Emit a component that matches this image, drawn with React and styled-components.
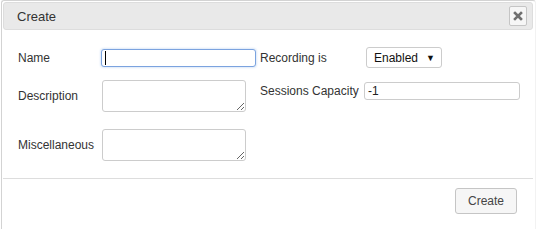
import React from 'react';
import styled, { createGlobalStyle } from 'styled-components';

const GlobalStyle = createGlobalStyle`
  html, body {
    margin: 0;
    padding: 0;
    background: #ffffff;
    overflow: hidden;
  }
  body {
    font-family: "Liberation Sans", Arial, sans-serif;
    font-size: 12px;
    color: #333333;
  }
`;

const Dialog = styled.div`
  margin-left: 1px;
  width: 535px;
  height: 229px;
  padding: 1px 2px 0 1px;
  border: 1px solid #d3d3d3;
  border-right-color: #f2f2f2;
  border-bottom: 0;
  border-radius: 3px 3px 0 0;
  background: #ffffff;
  box-sizing: border-box;
`;

const TitleBar = styled.div`
  display: flex;
  align-items: center;
  justify-content: space-between;
  height: 28px;
  padding: 0 5px 0 13px;
  border: 1px solid #dddddd;
  border-radius: 3px;
  background: #e9e9e9;
  box-sizing: border-box;
`;

const Title = styled.span`
  font-size: 13px;
  color: #333333;
`;

const CloseButton = styled.button`
  display: flex;
  align-items: center;
  justify-content: center;
  width: 18px;
  height: 20px;
  padding: 0;
  border: 1px solid #c5c5c5;
  border-radius: 2px;
  background: #f6f6f6;
  cursor: pointer;
`;

const Content = styled.div`
  display: flex;
  gap: 4px;
  padding: 17px 15px 17px 15px;
`;

const Column = styled.div`
  display: flex;
  flex-direction: column;
  width: ${({ $width }) => $width}px;
`;

const Row = styled.div`
  display: flex;
  align-items: center;
  min-height: ${({ $height }) => $height}px;
  margin-top: ${({ $space }) => $space || 0}px;
`;

const Label = styled.label`
  width: ${({ $width }) => $width}px;
  flex-shrink: 0;
  font-size: 12px;
  color: #333333;
  white-space: nowrap;
`;

const TextInput = styled.input`
  width: ${({ $width }) => $width}px;
  height: 18px;
  padding: 0 3px;
  border: 1px solid ${({ $focused }) => ($focused ? '#7ba3df' : '#cccccc')};
  border-radius: 3px;
  box-shadow: ${({ $focused }) => ($focused ? '0 0 2px 1px #dce8f8' : 'none')};
  font-family: "Liberation Sans", Arial, sans-serif;
  font-size: 12px;
  color: #222222;
  box-sizing: border-box;
  outline: none;
`;

const CaretWrap = styled.div`
  position: relative;
  display: flex;

  &::after {
    content: '';
    position: absolute;
    left: 4px;
    top: 2px;
    width: 1px;
    height: 14px;
    background: #000000;
  }
`;

const TextArea = styled.textarea`
  width: 144px;
  height: 32px;
  margin-left: 1px;
  padding: 2px 3px;
  border: 1px solid #cccccc;
  border-radius: 3px;
  font-family: "Liberation Sans", Arial, sans-serif;
  font-size: 12px;
  box-sizing: border-box;
  outline: none;
  display: block;
`;

const SelectBox = styled.div`
  display: flex;
  align-items: center;
  justify-content: space-between;
  width: 76px;
  height: 21px;
  margin-left: 2px;
  padding: 0 6px 0 7px;
  border: 1px solid #cccccc;
  border-radius: 3px;
  background: #ffffff;
  font-size: 12px;
  color: #111111;
  box-sizing: border-box;
`;

const Arrow = styled.span`
  font-size: 9px;
  color: #111111;
`;

const Footer = styled.div`
  display: flex;
  justify-content: flex-end;
  padding: 9px 16px 10px 0;
  border-top: 1px solid #dddddd;
`;

const Button = styled.button`
  width: 62px;
  height: 26px;
  padding: 0;
  border: 1px solid #c5c5c5;
  border-radius: 3px;
  background: #f6f6f6;
  font-family: "Liberation Sans", Arial, sans-serif;
  font-size: 12px;
  color: #454545;
  cursor: pointer;
`;

const CloseIcon = () => (
  <svg width="10" height="10" viewBox="0 0 10 10">
    <path d="M2 2 L8 8 M8 2 L2 8" stroke="#6f6f6f" strokeWidth="2.6" strokeLinecap="square" />
  </svg>
);

export default function App() {
  return (
    <>
      <GlobalStyle />
      <Dialog>
        <TitleBar>
          <Title>Create</Title>
          <CloseButton aria-label="close">
            <CloseIcon />
          </CloseButton>
        </TitleBar>

        <Content>
          <Column $width={238}>
            <Row $height={21}>
              <Label $width={83}>Name</Label>
              <CaretWrap>
                <TextInput $width={155} $focused />
              </CaretWrap>
            </Row>
            <Row $height={32} $space={12}>
              <Label $width={83}>Description</Label>
              <TextArea />
            </Row>
            <Row $height={32} $space={17}>
              <Label $width={83}>Miscellaneous</Label>
              <TextArea />
            </Row>
          </Column>

          <Column $width={260}>
            <Row $height={21}>
              <Label $width={104}>Recording is</Label>
              <SelectBox>
                <span>Enabled</span>
                <Arrow>▼</Arrow>
              </SelectBox>
            </Row>
            <Row $height={18} $space={14}>
              <Label $width={104}>Sessions Capacity</Label>
              <TextInput $width={156} defaultValue="-1" />
            </Row>
          </Column>
        </Content>

        <Footer>
          <Button>Create</Button>
        </Footer>
      </Dialog>
    </>
  );
}
